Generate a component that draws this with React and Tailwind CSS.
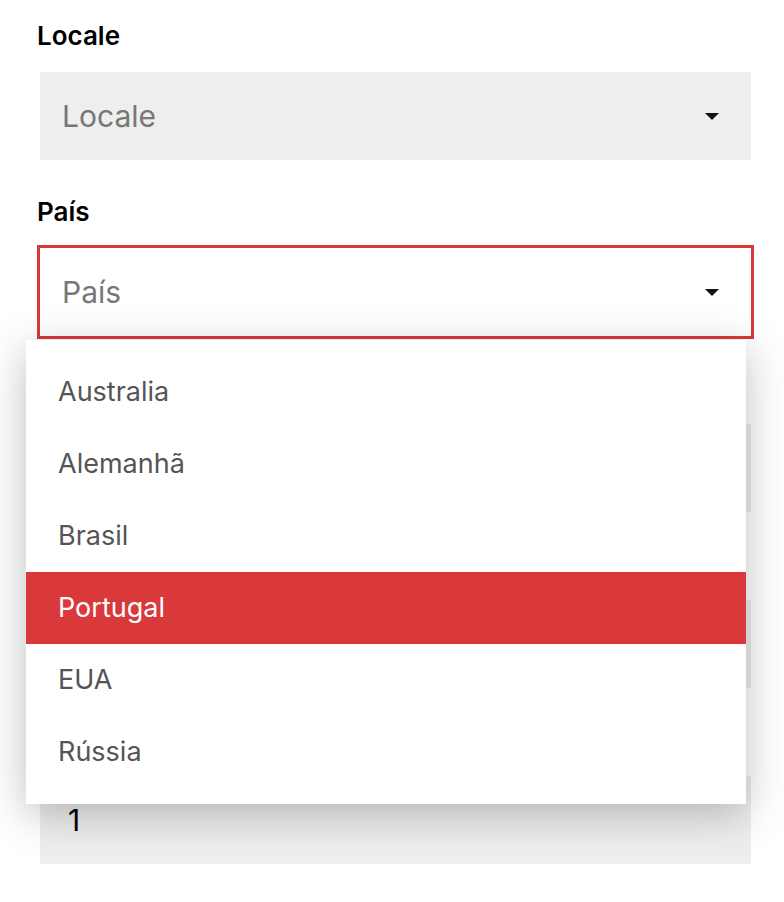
import React from 'react';

const countries = ['Australia', 'Alemanhã', 'Brasil', 'Portugal', 'EUA', 'Rússia'];

const Arrow = () => (
  <svg width="14" height="7" viewBox="0 0 14 7" className="shrink-0">
    <path d="M0 0h14L7 7z" fill="#111" />
  </svg>
);

const Field = ({ label, children }) => (
  <div className="mb-9">
    <div className="h-8 text-[26px] leading-8 font-semibold text-black">{label}</div>
    <div className="mt-5 ml-[3px]">{children}</div>
  </div>
);

// fields hidden behind the open menu: their labels are covered
const HiddenSelect = () => (
  <Field label="">
    <div className="flex h-[88px] items-center justify-end bg-[#eeeeee] pr-8">
      <Arrow />
    </div>
  </Field>
);

export default function App() {
  return (
    <div className="min-h-[902px] bg-white pt-5 pl-[37px] pr-[33px] font-['Inter',sans-serif]">
      <Field label="Locale">
        <div className="flex h-[88px] items-center justify-between bg-[#eeeeee] pl-[22px] pr-8">
          <span className="text-[30px] text-[#777777]">Locale</span>
          <Arrow />
        </div>
      </Field>

      <Field label="País">
        <div className="relative">
          <div className="flex h-[88px] items-center justify-between bg-white pl-[22px] pr-8 outline-3 outline-[#d9393b]">
            <span className="text-[30px] text-[#777777]">País</span>
            <Arrow />
          </div>

          {/* open menu */}
          <ul className="absolute left-[-14px] top-[calc(100%+4px)] z-10 w-[720px] bg-white py-4 shadow-[0_10px_40px_rgba(0,0,0,0.25)]">
            {countries.map(c => (
              <li
                key={c}
                className={
                  c === 'Portugal'
                    ? 'flex h-[72px] items-center bg-[#d9393b] pl-8 text-[27px] text-white'
                    : 'flex h-[72px] items-center pl-8 text-[27px] text-[#555555]'
                }
              >
                {c}
              </li>
            ))}
          </ul>
        </div>
      </Field>

      <HiddenSelect />
      <HiddenSelect />

      <Field label="">
        <div className="flex h-[88px] items-center bg-[#eeeeee] pl-7">
          <span className="text-[30px] text-black">1</span>
        </div>
      </Field>
    </div>
  );
}
